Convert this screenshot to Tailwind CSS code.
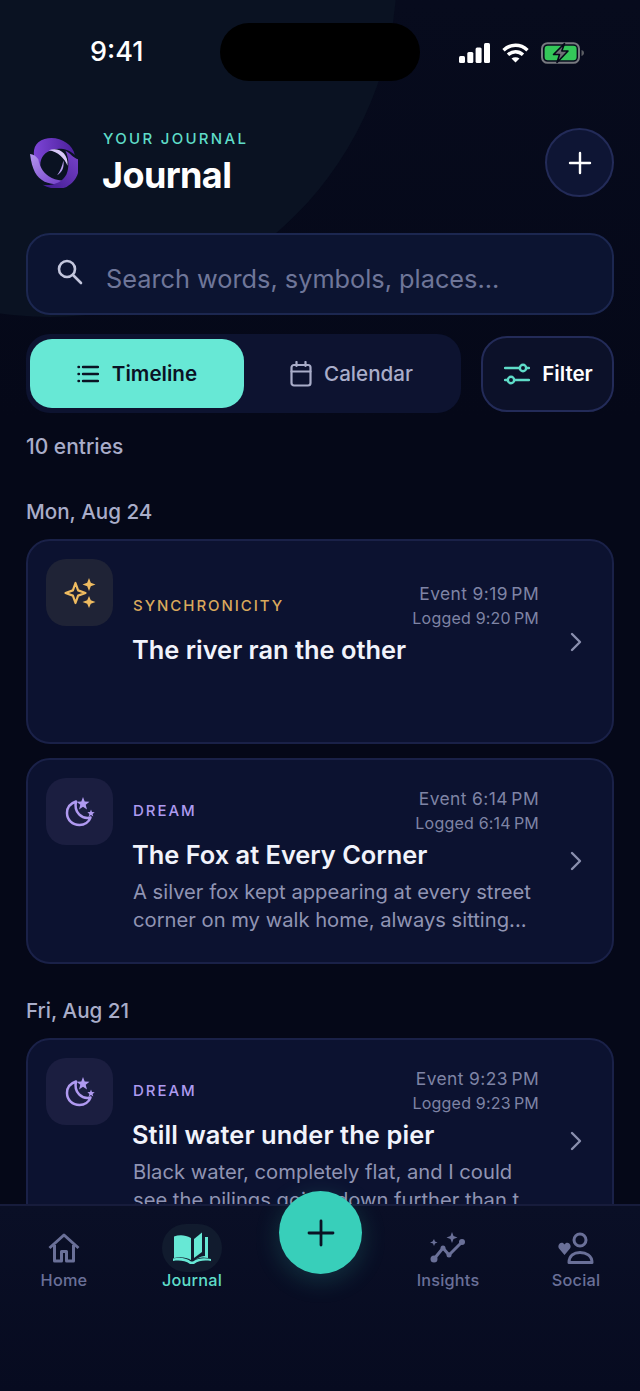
<!DOCTYPE html>
<html lang="en">
<head>
<meta charset="UTF-8">
<meta name="viewport" content="width=device-width, initial-scale=1.0">
<script src="https://cdn.jsdelivr.net/npm/@tailwindcss/browser@4"></script>
</head>
<body class="bg-[#050818]">
<div class="relative w-[640px] h-[1391px] overflow-hidden flex flex-col bg-gradient-to-b from-[#070b1d] to-[#050818] to-[30%] font-['Inter',sans-serif]">

  <!-- background blob behind the header -->
  <div class="absolute left-[-297px] top-[-377px] w-[694px] h-[694px] rounded-full bg-[#0a1222]"></div>

  <!-- status bar -->
  <div class="relative h-[104px] shrink-0">
    <div class="absolute left-[90px] top-[36px] text-[27px] leading-[32px] font-medium text-white">9:41</div>
    <div class="absolute left-[220px] top-[23px] w-[200px] h-[58px] rounded-full bg-black"></div>
    <div class="absolute left-[459px] top-[42px] flex items-center gap-[12px]">
      <svg width="31" height="20" viewBox="0 0 31 20" fill="#fff"><rect x="0" y="13" width="6" height="7" rx="1.5"/><rect x="8.3" y="9" width="6" height="11" rx="1.5"/><rect x="16.6" y="4.5" width="6" height="15.5" rx="1.5"/><rect x="25" y="0" width="6" height="20" rx="1.5"/></svg>
      <svg width="27" height="20" viewBox="0 0 27 20" fill="none" stroke="#fff" stroke-width="3.4"><path d="M1.5 7.2C8.5 .6 18.5 .6 25.5 7.2"/><path d="M6 11.8c4.4-4 10.6-4 15 0"/><path d="M13.5 19.6l-4-4.2c2.3-1.7 5.7-1.7 8 0z" fill="#fff" stroke="none"/></svg>
      <svg width="43" height="22" viewBox="0 0 43 22" fill="none"><rect x="1" y="1.2" width="37" height="19.6" rx="5.5" stroke="#77797f" stroke-width="2"/><rect x="3.6" y="3.8" width="32" height="14.4" rx="3.2" fill="#34c759"/><path d="M40.5 8v6c1.6-.4 2.5-1.6 2.5-3s-.9-2.6-2.5-3z" fill="#5b5d63"/><path d="M23.5 1.5L12.5 12.5h6l-2.5 8 11-11.5h-6.2z" fill="#6f7176" stroke="#050818" stroke-width="1.6" stroke-linejoin="round"/></svg>
    </div>
  </div>

  <main class="relative flex-1 min-h-0 overflow-hidden px-[26px] pt-[24px]">
    <!-- header -->
    <div class="flex items-start h-[69px]">
      <svg class="w-[48px] h-[51px] ml-[4px] mt-[9px] shrink-0" viewBox="2 2 46 48" preserveAspectRatio="none">
        <defs>
          <linearGradient id="logoA" x1="0" y1="0" x2="1" y2="0"><stop offset="0" stop-color="#7d45d6"/><stop offset="1" stop-color="#4a1f9a"/></linearGradient>
          <linearGradient id="logoB" x1="0" y1="0" x2="1" y2="1"><stop offset="0" stop-color="#b596ef"/><stop offset="1" stop-color="#6a35c4"/></linearGradient>
          <linearGradient id="logoC" x1="1" y1="0" x2="0" y2="1"><stop offset="0" stop-color="#7a44cc"/><stop offset="1" stop-color="#3f1a8e"/></linearGradient>
        </defs>
        <g transform="translate(0 1)">
          <path d="M10 6C22-3 42 4 45 18 39 12 30 11 24 13 15 15 11 22 12 30 5 24 3 12 10 6z" fill="url(#logoA)"/>
          <path d="M2 17c2 15 6 22 14 26 8 3 14 3 21 0 3-1 5-3 6-4-7 4-16 4-23-1-6-4-9-10-10-16-2-3-5-5-8-5z" fill="url(#logoB)"/>
          <path d="M36 14c4 2 8 7 12 8 3 12-2 21-11 26-7 3-15 2-23-2 10 1 19-2 23-10 3-7 2-16-1-22z" fill="url(#logoC)"/>
          <path d="M20 13.500C29 10 39 16 38 28 35 21 29 15 20 13.500z" fill="#d8c8f8"/>
          <path d="M34 23c1 6-1 11-6 14 3-4 5-9 6-14z" fill="#b9a0f0"/>
        </g>
      </svg>
      <div class="ml-[25px]">
        <div class="text-[15px] leading-[22px] font-medium tracking-[2.300px] text-[#5fdcc8]">YOUR JOURNAL</div>
        <div class="-ml-[1px] text-[36px] leading-[46px] font-bold tracking-[-0.6px] text-white mt-[2px]">Journal</div>
      </div>
      <button class="ml-auto w-[69px] h-[69px] rounded-full bg-[#0e1534] border-2 border-[#232b58] flex items-center justify-center">
        <svg width="24" height="24" viewBox="0 0 24 24" stroke="#fff" stroke-width="2.400" stroke-linecap="round"><path d="M12 2v20M2 12h20"/></svg>
      </button>
    </div>

    <!-- search -->
    <div class="mt-[36px] h-[82px] rounded-[24px] bg-[#0c1431] border-2 border-[#1c2750] flex items-center pl-[28px]">
      <svg class="mb-[4px]" width="28" height="28" viewBox="0 0 28 28" fill="none" stroke="#c3c6dc" stroke-width="2.600" stroke-linecap="round"><circle cx="11" cy="11" r="8"/><path d="M17 17l8 8"/></svg>
      <span class="ml-[22px] pt-[9px] text-[25.300px] text-[#6f7699]">Search words, symbols, places...</span>
    </div>

    <!-- view switch + filter -->
    <div class="mt-[19px] flex items-center h-[79px]">
      <div class="w-[435px] h-[79px] rounded-[24px] bg-[#0d1330] py-[5px] pl-[4px] pr-[5px] flex">
        <div class="w-[214px] rounded-[22px] bg-[#67e8d5] flex items-center justify-center gap-[13px]">
          <svg width="22" height="24" viewBox="2 0 22 24" fill="none" stroke="#0a1224" stroke-width="2.400" stroke-linecap="round"><path d="M8 5h15M8 12h15M8 19h15M3.500 5h.5M3.500 12h.5M3.500 19h.5"/></svg>
          <span class="pt-[2px] text-[20.600px] font-semibold text-[#0a1224]">Timeline</span>
        </div>
        <div class="flex-1 flex items-center justify-center gap-[12px] pl-[3px]">
          <svg width="22" height="26" viewBox="0 0 22 26" fill="none" stroke="#a9adc9" stroke-width="2.200" stroke-linecap="round"><rect x="1.500" y="4" width="19" height="20.500" rx="2.500"/><path d="M1.500 10.500h19M6.500 1v4M15.500 1v4"/></svg>
          <span class="pt-[2px] text-[20.600px] font-medium text-[#a9adc9]">Calendar</span>
        </div>
      </div>
      <button class="ml-auto w-[133px] h-[76px] rounded-[26px] bg-[#0c1129] border-2 border-[#232b58] flex items-center justify-center gap-[12px] pl-[2px]">
        <svg width="26" height="26" viewBox="0 0 26 26" fill="none" stroke="#5fdcc8" stroke-width="2.400" stroke-linecap="round"><path d="M1 7h15M22 7h3M1 19h3M10 19h15"/><circle cx="19" cy="7" r="3.200"/><circle cx="7" cy="19" r="3.200"/></svg>
        <span class="pt-[2px] text-[20.600px] font-semibold text-white">Filter</span>
      </button>
    </div>

    <div class="mt-[20px] text-[21px] leading-[28px] font-medium text-[#a9adc9]">10 entries</div>

    <div class="mt-[37px] text-[20.600px] leading-[28px] font-medium text-[#a9adc9]">Mon, Aug 24</div>

    <!-- card: synchronicity -->
    <div class="mt-[13px] h-[205px] rounded-[24px] bg-[#0c1230] border-2 border-[#1a2148] flex items-start pl-[18px] pt-[18px]">
      <div class="w-[67px] h-[67px] shrink-0 rounded-[20px] bg-[#1f2336] flex items-center justify-center">
        <svg width="34" height="34" viewBox="0 0 34 34" fill="none"><path d="M12.500 7l2.600 7.400L22.500 17l-7.400 2.600L12.500 27 9.900 19.600 2.500 17l7.400-2.600z" stroke="#eebb60" stroke-width="2.200" stroke-linejoin="round"/><path d="M26 2l1.800 4.700 4.700 1.800-4.700 1.800L26 15l-1.800-4.700-4.700-1.800 4.700-1.800zM26 20l1.800 4.200 4.700 1.800-4.700 1.800L26 32l-1.800-4.200-4.700-1.800 4.700-1.800z" fill="#eebb60"/></svg>
      </div>
      <div class="ml-[19px] flex-1 pt-[23px]">
        <div class="flex items-center justify-between pr-[31px]">
          <span class="ml-[1px] text-[15px] font-medium tracking-[1.950px] text-[#d9a95c]">SYNCHRONICITY</span>
          <div class="text-right text-[#7f84a5]"><div class="text-[17.400px] leading-[24px] tracking-[0.4px]">Event 9:19&#8239;PM</div><div class="text-[16px] leading-[24px] tracking-[0.2px]">Logged 9:20&#8239;PM</div></div>
        </div>
        <div class="mt-[4px] text-[25.400px] leading-[32px] font-semibold text-[#f1f3fb]">The river ran the other</div>
      </div>
      <svg class="mt-[73px] mr-[30px] shrink-0" width="12" height="20" viewBox="0 0 12 20" fill="none" stroke="#8a8fae" stroke-width="2.400" stroke-linecap="round" stroke-linejoin="round"><path d="M2 2l8 8-8 8"/></svg>
    </div>

    <!-- card: dream -->
    <div class="mt-[14px] h-[206px] rounded-[24px] bg-[#0c1230] border-2 border-[#1a2148] flex items-start pl-[18px] pt-[18px]">
      <div class="w-[67px] h-[67px] shrink-0 rounded-[20px] bg-[#1b1e40] flex items-center justify-center">
        <svg width="34" height="34" viewBox="0 0 34 34" fill="none"><path d="M13 6.500C7 8.500 4 13 4 18c0 7 5.500 12 12.500 12 5 0 9.500-3 11-7.500-8.500 2-17-5-14.500-16z" stroke="#b09af0" stroke-width="2.500" stroke-linejoin="round"/><path d="M20 2l1.700 4.600 4.800.2-3.800 3 1.300 4.700-4-2.700-4 2.700 1.300-4.700-3.800-3 4.800-.2zM28 14.500l1 2.500 2.700.2-2.100 1.700.7 2.600-2.300-1.500-2.300 1.500.7-2.600-2.100-1.700 2.700-.2z" fill="#b09af0"/></svg>
      </div>
      <div class="ml-[19px] flex-1 pt-[9px]">
        <div class="flex items-center justify-between pr-[31px]">
          <span class="ml-[1px] text-[15px] font-medium tracking-[1.950px] text-[#ae9bf0]">DREAM</span>
          <div class="text-right text-[#7f84a5]"><div class="text-[17.400px] leading-[24px] tracking-[0.4px]">Event 6:14&#8239;PM</div><div class="text-[16px] leading-[24px] tracking-[0.2px]">Logged 6:14&#8239;PM</div></div>
        </div>
        <div class="mt-[4px] text-[25.400px] leading-[32px] font-semibold text-[#f1f3fb]">The Fox at Every Corner</div>
        <div class="mt-[7px] ml-[1px] w-[404px] text-[20.200px] leading-[28px] text-[#9094b3]">A silver fox kept appearing at every street corner on my walk home, always sitting...</div>
      </div>
      <svg class="mt-[73px] mr-[30px] shrink-0" width="12" height="20" viewBox="0 0 12 20" fill="none" stroke="#8a8fae" stroke-width="2.400" stroke-linecap="round" stroke-linejoin="round"><path d="M2 2l8 8-8 8"/></svg>
    </div>

    <div class="mt-[33px] text-[20.600px] leading-[28px] font-medium text-[#a9adc9]">Fri, Aug 21</div>

    <!-- card: dream, runs under the tab bar -->
    <div class="mt-[13px] h-[206px] rounded-[24px] bg-[#0c1230] border-2 border-[#1a2148] flex items-start pl-[18px] pt-[18px]">
      <div class="w-[67px] h-[67px] shrink-0 rounded-[20px] bg-[#1b1e40] flex items-center justify-center">
        <svg width="34" height="34" viewBox="0 0 34 34" fill="none"><path d="M13 6.500C7 8.500 4 13 4 18c0 7 5.500 12 12.500 12 5 0 9.500-3 11-7.500-8.500 2-17-5-14.500-16z" stroke="#b09af0" stroke-width="2.500" stroke-linejoin="round"/><path d="M20 2l1.700 4.600 4.800.2-3.800 3 1.300 4.700-4-2.700-4 2.700 1.300-4.700-3.800-3 4.800-.2zM28 14.500l1 2.500 2.700.2-2.100 1.700.7 2.600-2.300-1.500-2.300 1.500.7-2.600-2.100-1.700 2.700-.2z" fill="#b09af0"/></svg>
      </div>
      <div class="ml-[19px] flex-1 pt-[9px]">
        <div class="flex items-center justify-between pr-[31px]">
          <span class="ml-[1px] text-[15px] font-medium tracking-[1.950px] text-[#ae9bf0]">DREAM</span>
          <div class="text-right text-[#7f84a5]"><div class="text-[17.400px] leading-[24px] tracking-[0.4px]">Event 9:23&#8239;PM</div><div class="text-[16px] leading-[24px] tracking-[0.2px]">Logged 9:23&#8239;PM</div></div>
        </div>
        <div class="mt-[4px] text-[25.400px] leading-[32px] font-semibold tracking-[0.1px] text-[#f1f3fb]">Still water under the pier</div>
        <div class="mt-[7px] ml-[1px] w-[404px] text-[20.200px] leading-[28px] text-[#9094b3]">Black water, completely flat, and I could see the pilings going down further than t</div>
      </div>
      <svg class="mt-[73px] mr-[30px] shrink-0" width="12" height="20" viewBox="0 0 12 20" fill="none" stroke="#8a8fae" stroke-width="2.400" stroke-linecap="round" stroke-linejoin="round"><path d="M2 2l8 8-8 8"/></svg>
    </div>
  </main>

  <!-- tab bar -->
  <nav class="relative h-[187px] shrink-0 bg-gradient-to-b from-[#0a0f26] to-[#070b20] border-t-2 border-[#171c3c] grid grid-cols-5 pt-[18px] items-start">
    <div class="flex flex-col items-center">
      <div class="h-[48px] flex items-center justify-center">
        <svg width="32" height="30" viewBox="0 0 32 30" fill="none" stroke="#6a7098" stroke-width="3" stroke-linejoin="round"><path d="M1.500 15L16 2l14.500 13"/><path d="M6.500 12v16h7v-9.500h5V28h7V12"/></svg>
      </div>
      <span class="-mt-[3px] text-[16.300px] leading-[22px] font-medium tracking-[0.2px] text-[#6a7098]">Home</span>
    </div>
    <div class="flex flex-col items-center">
      <div class="w-[60px] h-[48px] rounded-full bg-[#111b2e] flex items-center justify-center">
        <svg width="38" height="32" viewBox="0 0 38 32" fill="#67e8d5"><path d="M1 4.500C6 2.500 12 2.500 18 6v22c-5-3-11-3.500-17-2z"/><path d="M21 26V7l8-6.500V20z"/><path d="M32 5h3v21c-5-1-10-1-14 3 4-4 9-5 11-5z"/><path d="M0 26.500c6-1.500 13-1 18 3h2c5-3.500 11-4 18-2.500v2c-7-1-12-.5-17 3h-4c-5-3.500-11-4-17-3z"/></svg>
      </div>
      <span class="-mt-[3px] text-[16.300px] leading-[22px] font-medium tracking-[0.2px] text-[#5fdcc8]">Journal</span>
    </div>
    <div></div>
    <div class="flex flex-col items-center">
      <div class="h-[48px] flex items-center justify-center">
        <svg width="36" height="32" viewBox="0 0 36 32" fill="none"><path d="M4 27l9-11 6 7 13-13" stroke="#6a7098" stroke-width="3" stroke-linejoin="round"/><circle cx="4" cy="27" r="3.500" fill="#6a7098"/><circle cx="13" cy="16" r="2.500" fill="#6a7098"/><circle cx="19" cy="23" r="2.500" fill="#6a7098"/><circle cx="32" cy="10" r="3" fill="#6a7098"/><path d="M22 0l1.500 4 4 1.500-4 1.500-1.500 4-1.500-4-4-1.500 4-1.500zM4 7l1 2.500 2.500 1-2.500 1-1 2.500-1-2.500L0 10.500l2.500-1z" fill="#6a7098"/></svg>
      </div>
      <span class="-mt-[3px] text-[16.300px] leading-[22px] font-medium tracking-[0.2px] text-[#6a7098]">Insights</span>
    </div>
    <div class="flex flex-col items-center">
      <div class="h-[48px] flex items-center justify-center">
        <svg width="36" height="32" viewBox="0 0 36 32" fill="none"><circle cx="22" cy="8" r="6" stroke="#6a7098" stroke-width="3"/><path d="M11 30.500c0-7 5-10 11-10s12 3 12 10z" stroke="#6a7098" stroke-width="3" stroke-linejoin="round"/><path d="M6.500 23L1 16.500C-1.500 12.500 4 8.500 6.500 12.500 9 8.500 14.500 12.500 12 16.500z" fill="#6a7098"/></svg>
      </div>
      <span class="-mt-[3px] text-[16.300px] leading-[22px] font-medium tracking-[0.2px] text-[#6a7098]">Social</span>
    </div>
    <button class="absolute left-[279px] top-[-15px] w-[83px] h-[83px] rounded-full bg-[#38cfba] shadow-[0_6px_26px_rgba(56,207,186,0.2)] flex items-center justify-center">
      <svg width="28" height="28" viewBox="0 0 28 28" stroke="#0a1224" stroke-width="2.800" stroke-linecap="round"><path d="M14 2v24M2 14h24"/></svg>
    </button>
  </nav>
</div>
</body>
</html>
